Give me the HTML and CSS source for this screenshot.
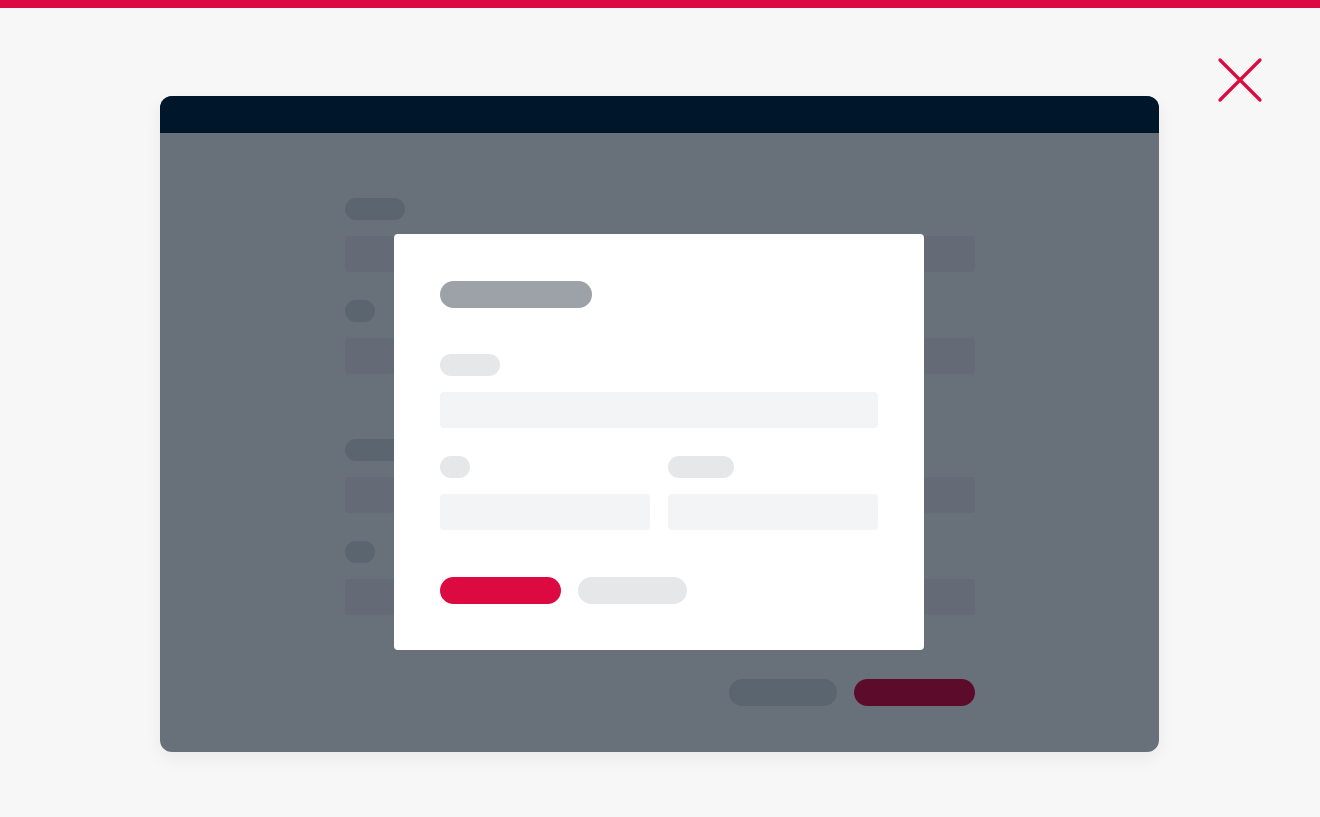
FILE: index.html
```html
<!DOCTYPE html>
<html lang="en">
<head>
<meta charset="utf-8">
<title>Modal illustration</title>
<link rel="stylesheet" href="styles.css">
</head>
<body>
<div class="topbar"></div>
<main class="stage">
  <button class="close" aria-label="Close">
    <svg width="48" height="48" viewBox="0 0 48 48" fill="none" stroke="#dc0a40" stroke-width="3.2" stroke-linecap="round">
      <path d="M4 4 L44 44 M44 4 L4 44"/>
    </svg>
  </button>
  <div class="window">
    <div class="win-header"></div>
    <div class="win-body">
      <div class="bg-form">
        <div class="bg-label w60"></div>
        <div class="bg-input"></div>
        <div class="bg-label w30 mt28"></div>
        <div class="bg-input"></div>
        <div class="bg-label w80 mt65"></div>
        <div class="bg-input"></div>
        <div class="bg-label w30 mt28"></div>
        <div class="bg-input"></div>
        <div class="bg-actions">
          <div class="bg-btn grey"></div>
          <div class="bg-btn red"></div>
        </div>
      </div>
      <div class="modal">
        <div class="m-title"></div>
        <div class="m-label w60"></div>
        <div class="m-input"></div>
        <div class="m-row">
          <div class="m-col">
            <div class="m-label w30 mt0"></div>
            <div class="m-input"></div>
          </div>
          <div class="m-col">
            <div class="m-label w66 mt0"></div>
            <div class="m-input"></div>
          </div>
        </div>
        <div class="m-actions">
          <div class="m-btn primary"></div>
          <div class="m-btn secondary"></div>
        </div>
      </div>
    </div>
  </div>
</main>
</body>
</html>
```

FILE: styles.css
```css
* { box-sizing: border-box; }
html, body { margin: 0; padding: 0; }
body {
  width: 1320px;
  height: 817px;
  background: #f7f7f7;
  overflow: hidden;
  font-family: "Liberation Sans", Arial, sans-serif;
}
.topbar {
  height: 8px;
  background: #dc0a40;
}
.stage {
  position: relative;
  padding: 88px 0 0 160px;
}
.close {
  position: absolute;
  left: 1216px;
  top: 48px;
  width: 48px;
  height: 48px;
  padding: 0;
  border: 0;
  background: none;
  display: block;
}
.close svg { display: block; }
.window {
  width: 999px;
  height: 656px;
  border-radius: 12px;
  overflow: hidden;
  background: #68717a;
  box-shadow: 0 6px 18px rgba(0, 0, 0, 0.06);
  display: flex;
  flex-direction: column;
}
.win-header {
  height: 37px;
  background: #00172b;
  flex: none;
}
.win-body {
  position: relative;
  flex: 1;
  padding: 65px 0 0 185px;
}
.bg-form {
  width: 630px;
  display: flex;
  flex-direction: column;
}
.bg-label {
  height: 22px;
  border-radius: 11px;
  background: #5b656f;
}
.bg-input {
  height: 36px;
  margin-top: 16px;
  border-radius: 4px;
  background: #656a77;
}
.w30 { width: 30px; }
.w60 { width: 60px; }
.w66 { width: 66px; }
.w80 { width: 80px; }
.mt28 { margin-top: 28px; }
.mt65 { margin-top: 65px; }
.bg-actions {
  margin-top: 64px;
  display: flex;
  justify-content: flex-end;
  gap: 17px;
}
.bg-btn {
  height: 27px;
  border-radius: 14px;
}
.bg-btn.grey { width: 108px; background: #5b656f; }
.bg-btn.red { width: 121px; background: #5c0b2b; }

.modal {
  position: absolute;
  left: 234px;
  top: 101px;
  width: 530px;
  height: 416px;
  background: #ffffff;
  border-radius: 4px;
  padding: 47px 46px 0 46px;
  display: flex;
  flex-direction: column;
}
.m-title {
  width: 152px;
  height: 27px;
  border-radius: 14px;
  background: #9da1a8;
}
.m-label {
  height: 22px;
  border-radius: 11px;
  background: #e6e7e8;
  margin-top: 46px;
}
.m-label.mt0 { margin-top: 0; }
.m-input {
  height: 36px;
  margin-top: 16px;
  border-radius: 4px;
  background: #f2f4f5;
}
.m-row {
  margin-top: 28px;
  display: flex;
  gap: 18px;
}
.m-col {
  flex: 1;
  display: flex;
  flex-direction: column;
}
.m-actions {
  margin-top: 47px;
  display: flex;
  gap: 17px;
}
.m-btn {
  height: 27px;
  border-radius: 14px;
}
.m-btn.primary { width: 121px; background: #dc0a40; }
.m-btn.secondary { width: 109px; background: #e6e7e8; }
```
